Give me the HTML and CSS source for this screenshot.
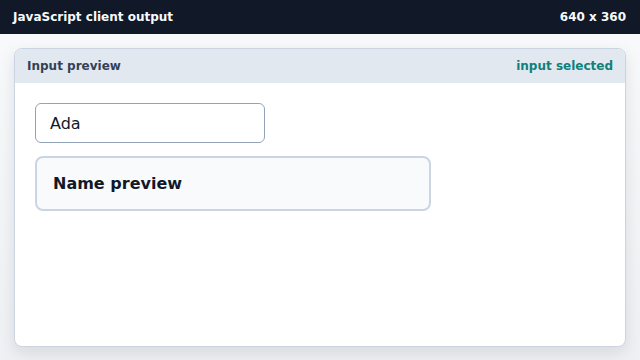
FILE: index.html
```html
<!DOCTYPE html>
<html>
<head>
<meta charset="utf-8">
<link rel="stylesheet" href="styles.css">
</head>
<body>
<div class="topbar">
  <span class="title">JavaScript client output</span>
  <span class="size">640 x 360</span>
</div>
<main class="stage">
  <section class="panel">
    <header class="panel-head">
      <span class="panel-title">Input preview</span>
      <span class="status">input selected</span>
    </header>
    <div class="panel-body">
      <input class="name-input" type="text" value="Ada">
      <div class="preview"><strong>Name preview</strong></div>
    </div>
  </section>
</main>
</body>
</html>
```
FILE: styles.css
```css
* { box-sizing: border-box; }
html, body { margin: 0; height: 100%; }
body {
  font-family: "DejaVu Sans", sans-serif;
  background: #f1f3f6;
  display: flex;
  flex-direction: column;
  width: 640px;
  height: 360px;
  overflow: hidden;
}
.topbar {
  height: 34px;
  flex: none;
  background: #111827;
  color: #f8fafc;
  display: flex;
  align-items: center;
  justify-content: space-between;
  padding: 0 14px 0 13px;
  font-size: 12px;
  font-weight: bold;
}
.stage {
  flex: 1;
  padding: 14px 14px 13px 14px;
  display: flex;
  background: linear-gradient(#f8f9fb, #eef0f3);
}
.panel {
  flex: 1;
  background: #fff;
  border: 1px solid #cbd5e1;
  border-radius: 8px;
  box-shadow: 0 6px 16px rgba(15, 23, 42, 0.10);
  overflow: hidden;
  display: flex;
  flex-direction: column;
}
.panel-head {
  height: 34px;
  flex: none;
  background: #e2e8f0;
  display: flex;
  align-items: center;
  justify-content: space-between;
  padding: 0 12px 0 12px;
  font-size: 12px;
  font-weight: bold;
}
.panel-title { color: #334155; }
.status { color: #0f7f7a; }
.panel-body {
  padding: 20px;
  display: flex;
  flex-direction: column;
  align-items: flex-start;
  gap: 13px;
}
.name-input {
  width: 230px;
  height: 40px;
  border: 1px solid #94a3b8;
  border-radius: 6px;
  padding: 0 14px;
  font-family: "DejaVu Sans", sans-serif;
  font-size: 16px;
  color: #111827;
  background: #fff;
  outline: none;
}
.preview {
  width: 396px;
  height: 55px;
  border: 2px solid #cbd5e1;
  border-radius: 8px;
  background: #f8fafc;
  display: flex;
  align-items: center;
  padding: 0 16px;
  font-size: 16px;
  color: #111827;
}
```
